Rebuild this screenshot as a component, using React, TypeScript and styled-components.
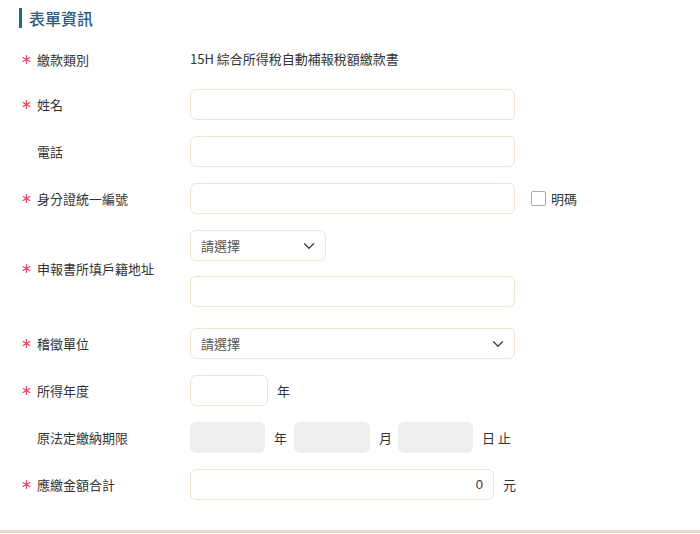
import React from 'react'
import styled, { createGlobalStyle } from 'styled-components'

const GlobalStyle = createGlobalStyle`
  html, body {
    margin: 0;
    padding: 0;
    background: #fff;
  }
  body {
    font-family: "Noto Sans CJK TC", "Noto Sans", sans-serif;
    color: #333;
  }
`

type RowProps = {
  label: string
  required?: boolean
  children: React.ReactNode
  tall?: boolean
}

const StarIcon = () => (
  <svg width="9" height="9" viewBox="0 0 9 9" fill="none">
    <g stroke="#e2455e" strokeWidth="1.2" strokeLinecap="round">
      <path d="M4.5 0.6V8.4" />
      <path d="M1.1 2.55L7.9 6.45" />
      <path d="M1.1 6.45L7.9 2.55" />
    </g>
  </svg>
)

const FormRow = ({ label, required, children, tall }: RowProps) => (
  <Row $tall={tall}>
    <Label>
      <Star>{required && <StarIcon />}</Star>
      {label}
    </Label>
    <Field>{children}</Field>
  </Row>
)

const Chevron = () => (
  <svg width="12" height="8" viewBox="0 0 12 8" fill="none">
    <path d="M1.5 1.8L6 6.2L10.5 1.8" stroke="#444" strokeWidth="1.4" strokeLinecap="round" strokeLinejoin="round" />
  </svg>
)

const App = () => {
  return (
    <>
      <GlobalStyle />
      <Page>
        <Title>表單資訊</Title>
        <Form>
          <FormRow label="繳款類別" required>
            <Value>15H 綜合所得稅自動補報稅額繳款書</Value>
          </FormRow>
          <FormRow label="姓名" required>
            <Input />
          </FormRow>
          <FormRow label="電話">
            <Input />
          </FormRow>
          <FormRow label="身分證統一編號" required>
            <Input />
            <CheckWrap>
              <CheckBox />
              明碼
            </CheckWrap>
          </FormRow>
          <FormRow label="申報書所填戶籍地址" required tall>
            <Stack>
              <Select $width={136}>
                請選擇
                <Chevron />
              </Select>
              <Input />
            </Stack>
          </FormRow>
          <FormRow label="稽徵單位" required>
            <Select $width={325}>
              請選擇
              <Chevron />
            </Select>
          </FormRow>
          <FormRow label="所得年度" required>
            <Input $width={78} />
            <Unit>年</Unit>
          </FormRow>
          <FormRow label="原法定繳納期限">
            <Input $width={75} disabled />
            <Unit $after={7}>年</Unit>
            <Input $width={76} disabled />
            <Unit $after={6}>月</Unit>
            <Input $width={75} disabled />
            <Unit>日 止</Unit>
          </FormRow>
          <FormRow label="應繳金額合計" required>
            <Input $width={304} $right>0</Input>
            <Unit>元</Unit>
          </FormRow>
        </Form>
      </Page>
    </>
  )
}

const Page = styled.div`
  width: 700px;
  height: 533px;
  box-sizing: border-box;
  padding: 8px 0 0 19px;
  border-bottom: 3px solid #eddcc9;
  overflow: hidden;
`

const Title = styled.h2`
  margin: 0;
  height: 20px;
  line-height: 20px;
  border-left: 3px solid #1f6c8d;
  padding-left: 7px;
  font-size: 16px;
  font-weight: 500;
  color: #2f5d7b;
`

const Form = styled.div`
  display: flex;
  flex-direction: column;
  gap: 16px;
  margin-top: 17px;
`

const Row = styled.div<{ $tall?: boolean }>`
  display: flex;
  align-items: center;
  margin-bottom: ${(p) => (p.$tall ? 5 : 0)}px;
`

const Label = styled.div`
  width: 171px;
  flex: none;
  display: flex;
  align-items: center;
  font-size: 13px;
  color: #333;
`

const Star = styled.span`
  display: inline-flex;
  align-items: center;
  width: 18px;
  padding-left: 3px;
  box-sizing: border-box;
`

const Field = styled.div`
  display: flex;
  align-items: center;
`

const Value = styled.div`
  font-size: 13px;
  color: #333;
  height: 28px;
  line-height: 28px;
`

const Input = styled.div<{ $width?: number; disabled?: boolean; $right?: boolean }>`
  width: ${(p) => p.$width ?? 325}px;
  height: 31px;
  box-sizing: border-box;
  border: 1px solid ${(p) => (p.disabled ? '#eeeeee' : '#f1e2d3')};
  background: ${(p) => (p.disabled ? '#eeeeee' : '#fff')};
  border-radius: 6px;
  font-size: 13px;
  line-height: 29px;
  padding: 0 10px;
  text-align: ${(p) => (p.$right ? 'right' : 'left')};
  color: #333;
  font-family: "Liberation Sans", "Noto Sans CJK TC", sans-serif;
`

const Select = styled.div<{ $width: number }>`
  width: ${(p) => p.$width}px;
  height: 31px;
  box-sizing: border-box;
  border: 1px solid #f1e2d3;
  border-radius: 6px;
  display: flex;
  align-items: center;
  justify-content: space-between;
  padding: 0 10px 0 10px;
  font-size: 13px;
  color: #555;
`

const Stack = styled.div`
  display: flex;
  flex-direction: column;
  gap: 15px;
`

const Unit = styled.span<{ $after?: number }>`
  font-size: 13px;
  color: #333;
  margin-left: 9px;
  margin-right: ${(p) => p.$after ?? 0}px;
`

const CheckWrap = styled.label`
  display: flex;
  align-items: center;
  gap: 5px;
  margin-left: 16px;
  font-size: 13px;
  color: #333;
`

const CheckBox = styled.span`
  width: 13px;
  height: 13px;
  border: 1px solid #aaa;
  border-radius: 2px;
  background: #fff;
`

export default App
